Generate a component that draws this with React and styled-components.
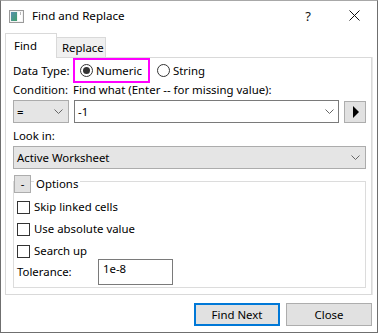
import React from 'react';
import styled, { createGlobalStyle } from 'styled-components';

const GlobalStyle = createGlobalStyle`
  * { box-sizing: border-box; }
  body {
    margin: 0;
    background: #fff;
    font-family: "Noto Sans", "Segoe UI", sans-serif;
    font-size: 11.4px;
    color: #000;
  }
`;

const Chevron = () => (
  <svg width="9" height="5" viewBox="0 0 9 5">
    <path d="M0.5 0.5 L4.5 4.5 L8.5 0.5" fill="none" stroke="#666" strokeWidth="1" />
  </svg>
);

const AppIcon = () => (
  <svg width="15" height="13" viewBox="0 0 15 13">
    <defs>
      <linearGradient id="pane" x1="0" y1="0" x2="1" y2="1">
        <stop offset="0" stopColor="#5a8fb0" />
        <stop offset="1" stopColor="#3f9f6a" />
      </linearGradient>
    </defs>
    <rect x="0.5" y="0.5" width="14" height="12" fill="#f4f4f4" stroke="#9a9a9a" />
    <rect x="2" y="2" width="6" height="9" fill="url(#pane)" />
    <rect x="9" y="2" width="4" height="9" fill="#fff" />
    <rect x="11" y="2" width="1" height="3" fill="#b8b8b8" />
  </svg>
);

export default function App() {
  return (
    <>
      <GlobalStyle />
      <Window>
        <TitleBar>
          <IconSlot><AppIcon /></IconSlot>
          <Title>Find and Replace</Title>
          <CaptionButton>?</CaptionButton>
          <CaptionButton>
            <svg width="11" height="11" viewBox="0 0 11 11">
              <path d="M0.5 0.5 L10.5 10.5 M10.5 0.5 L0.5 10.5" stroke="#111" strokeWidth="1" />
            </svg>
          </CaptionButton>
        </TitleBar>

        <Body>
          <Tabs>
            <Tab $active>Find</Tab>
            <Tab>Replace</Tab>
          </Tabs>

          <Panel>
            <Row $h={25}>
              <Label $w={60}>Data Type:</Label>
              <Highlight>
                <Radio $checked />
                <span>Numeric</span>
              </Highlight>
              <RadioOption>
                <Radio />
                <span>String</span>
              </RadioOption>
            </Row>

            <Row $h={14}>
              <Label $w={60}>Condition:</Label>
              <span>Find what (Enter -- for missing value):</span>
            </Row>

            <Row $h={23} $mt={3} $gap={5}>
              <Combo $w={56}>
                <span>=</span>
                <Chevron />
              </Combo>
              <TextCombo>
                <span>-1</span>
                <Chevron />
              </TextCombo>
              <ArrowButton>
                <svg width="8" height="12" viewBox="0 0 8 12">
                  <path d="M1 0 L7 6 L1 12 Z" fill="#000" />
                </svg>
              </ArrowButton>
            </Row>

            <Row $h={14} $mt={6}>
              <span>Look in:</span>
            </Row>

            <Row $h={23} $mt={3}>
              <Combo>
                <span>Active Worksheet</span>
                <Chevron />
              </Combo>
            </Row>

            <Group>
              <Legend>
                <ToggleButton>-</ToggleButton>
                <LegendText>Options</LegendText>
              </Legend>
              <CheckList>
                <CheckRow><Checkbox /><span>Skip linked cells</span></CheckRow>
                <CheckRow><Checkbox /><span>Use absolute value</span></CheckRow>
                <CheckRow><Checkbox /><span>Search up</span></CheckRow>
              </CheckList>
              <ToleranceRow>
                <Label $w={81}>Tolerance:</Label>
                <TextBox>1e-8</TextBox>
              </ToleranceRow>
            </Group>
          </Panel>

          <Footer>
            <Button $default>Find Next</Button>
            <Button>Close</Button>
          </Footer>
        </Body>
      </Window>
    </>
  );
}

const Window = styled.div`
  width: 378px;
  height: 333px;
  border: 1px solid #6f6f6f;
  border-top-color: #a8a8a8;
  background: #fff;
  display: flex;
  flex-direction: column;
`;

const TitleBar = styled.div`
  height: 29px;
  display: flex;
  align-items: center;
  padding-left: 8px;
`;

const IconSlot = styled.div`
  width: 15px;
  height: 13px;
  display: flex;
  margin-top: 1px;
`;

const Title = styled.div`
  flex: 1;
  margin-left: 8px;
  font-size: 11.6px;
  line-height: 14px;
`;

const CaptionButton = styled.div`
  width: 46px;
  height: 29px;
  display: flex;
  align-items: center;
  justify-content: center;
  font-size: 13px;
  color: #111;
`;

const Body = styled.div`
  flex: 1;
  display: flex;
  flex-direction: column;
  padding: 3px 5px 0 4px;
`;

const Tabs = styled.div`
  display: flex;
  align-items: flex-end;
  height: 24px;
`;

const Tab = styled.div`
  position: relative;
  display: flex;
  align-items: center;
  border: 1px solid #d9d9d9;
  border-bottom: none;
  line-height: 14px;
  ${(p) =>
    p.$active
      ? `
    z-index: 1;
    width: 52px;
    height: 25px;
    margin-bottom: -1px;
    padding-left: 8px;
    background: #fff;
  `
      : `
    width: 50px;
    height: 20px;
    margin-left: -1px;
    padding-left: 5px;
    padding-top: 1px;
    background: #f0f0f0;
  `}
`;

const Panel = styled.div`
  height: 238px;
  border: 1px solid #d9d9d9;
  box-shadow: 1px 0 0 #e8e8e8;
  padding: 0 5px 0 7px;
  display: flex;
  flex-direction: column;
`;

const Row = styled.div`
  display: flex;
  align-items: center;
  height: ${(p) => p.$h}px;
  margin-top: ${(p) => p.$mt || 0}px;
  gap: ${(p) => p.$gap || 0}px;
  line-height: 14px;
  white-space: nowrap;
`;

const Label = styled.span`
  width: ${(p) => p.$w}px;
  flex: none;
`;

const Highlight = styled.div`
  width: 77px;
  height: 25px;
  border: 2px solid #ff00ff;
  display: flex;
  align-items: center;
  gap: 3px;
  padding-left: 5px;
`;

const RadioOption = styled.div`
  display: flex;
  align-items: center;
  gap: 3px;
  margin-left: 7px;
`;

const Radio = styled.span`
  width: 13px;
  height: 13px;
  border: 1px solid #333;
  border-radius: 50%;
  display: flex;
  align-items: center;
  justify-content: center;
  flex: none;
  &::after {
    content: '';
    width: 7px;
    height: 7px;
    border-radius: 50%;
    background: ${(p) => (p.$checked ? '#333' : 'transparent')};
  }
`;

const Combo = styled.div`
  width: ${(p) => (p.$w ? `${p.$w}px` : '100%')};
  height: 100%;
  background: #e5e5e5;
  border: 1px solid #acacac;
  display: flex;
  align-items: center;
  justify-content: space-between;
  padding: 0 5px 0 3px;
`;

const TextCombo = styled.div`
  flex: 1;
  height: 100%;
  background: #fff;
  border: 1px solid #7a7a7a;
  display: flex;
  align-items: center;
  justify-content: space-between;
  padding: 0 4px 0 3px;
`;

const ArrowButton = styled.div`
  width: 22px;
  height: 22px;
  align-self: flex-end;
  background: #e1e1e1;
  border: 1px solid #adadad;
  display: flex;
  align-items: center;
  justify-content: center;
  padding-left: 1px;
`;

const Group = styled.div`
  margin-top: 12px;
  height: 107px;
  border: 1px solid #dcdcdc;
  display: flex;
  flex-direction: column;
`;

const Legend = styled.div`
  display: flex;
  align-items: center;
  height: 18px;
  margin-top: -7px;
`;

const ToggleButton = styled.div`
  width: 17px;
  height: 18px;
  background: #e1e1e1;
  border: 1px solid #adadad;
  display: flex;
  align-items: center;
  justify-content: center;
  line-height: 14px;
`;

const LegendText = styled.span`
  margin-left: 3px;
  padding: 0 2px;
  background: #fff;
  line-height: 14px;
`;

const CheckList = styled.div`
  display: flex;
  flex-direction: column;
  gap: 2px;
  margin-top: 4px;
  padding-left: 3px;
`;

const CheckRow = styled.div`
  display: flex;
  align-items: center;
  gap: 4px;
  height: 20px;
  line-height: 14px;
`;

const Checkbox = styled.span`
  width: 13px;
  height: 13px;
  border: 1px solid #333;
  background: #fff;
  flex: none;
`;

const ToleranceRow = styled.div`
  display: flex;
  align-items: center;
  margin-top: -2px;
  padding-left: 3px;
  line-height: 14px;
`;

const TextBox = styled.div`
  width: 75px;
  height: 26px;
  border: 1px solid #7a7a7a;
  padding: 2px 0 0 4px;
`;

const Footer = styled.div`
  display: flex;
  justify-content: flex-end;
  gap: 6px;
  padding: 8px 0 0 0;
`;

const Button = styled.div`
  width: 86px;
  height: 23px;
  background: #e1e1e1;
  border: ${(p) => (p.$default ? '2px solid #0078d7' : '1px solid #adadad')};
  display: flex;
  align-items: center;
  justify-content: center;
  line-height: 14px;
`;
